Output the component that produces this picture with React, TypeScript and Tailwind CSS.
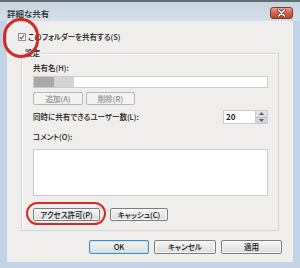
import React from "react";

function Btn({
  children,
  w,
  disabled,
  def,
}: {
  children: React.ReactNode;
  w: string;
  disabled?: boolean;
  def?: boolean;
}) {
  return (
    <div
      className={
        "flex items-center justify-center rounded-[2px] border " +
        w +
        " " +
        (disabled
          ? "border-[#b4b8bb] bg-[#f2f2f2] text-[#8c8c8c]"
          : def
          ? "border-[#3f8fb6] bg-gradient-to-b from-[#f4f6f7] to-[#dcdfe2] text-[#111111] shadow-[inset_0_0_0_1px_#bfe2f3]"
          : "border-[#7c7c7c] bg-gradient-to-b from-[#f6f6f6] to-[#dcdcdc] text-[#111111] shadow-[inset_0_0_0_1px_#fbfbfb]")
      }
    >
      <span className="leading-[10px]">{children}</span>
    </div>
  );
}

export default function App() {
  return (
    <div className="relative flex h-[268px] w-[300px] flex-col overflow-hidden bg-[#c1d3e4] font-['Noto_Sans_CJK_JP',sans-serif] text-[7.5px] font-medium text-[#151515] [font-feature-settings:'palt']">
      {/* title bar */}
      <div className="flex h-[21px] items-start border-t-2 border-[#606d72] bg-gradient-to-b from-[#c8d5e0] to-[#d3dfe9] px-[7px]">
        <span className="mt-[6px] text-[8.5px] leading-[11px] text-[#2a2a2a]">詳細な共有</span>
        <div className="ml-auto mt-[5px] flex h-[12px] w-[23px] items-center justify-center rounded-[3px] border border-[#7e3a31] bg-gradient-to-b from-[#e9a093] via-[#d3604d] to-[#c4412d]">
          <svg width="9" height="8" viewBox="0 0 9 8">
            <path d="M1.5 1 L7.5 7 M7.5 1 L1.5 7" stroke="#5a2a24" strokeWidth="3" strokeLinecap="round" />
            <path d="M1.5 1 L7.5 7 M7.5 1 L1.5 7" stroke="#ffffff" strokeWidth="1.6" strokeLinecap="round" />
          </svg>
        </div>
      </div>

      {/* body */}
      <div className="flex flex-1 px-[7px] pb-[6px]">
        <div className="flex flex-1 flex-col bg-[#f0eeec] pt-[11px]">
          {/* checkbox row */}
          <div className="ml-[11px] flex items-center gap-[2px]">
            <div className="flex h-[8px] w-[8px] items-center justify-center border border-[#8f8f8f] bg-gradient-to-br from-[#e6e6e6] to-[#ffffff]">
              <svg width="6" height="6" viewBox="0 0 6 6">
                <path d="M0.8 3.2 L2.4 4.8 L5.2 1" stroke="#4a5a8a" strokeWidth="1.1" fill="none" />
              </svg>
            </div>
            <span className="leading-[10px]">このフォルダーを共有する(S)</span>
          </div>

          {/* group box */}
          <div className="relative mx-[14px] mt-[11px] flex flex-col border border-[#cfd6db] px-[10px] pb-[9px] pl-[11px] pt-[9px] shadow-[inset_1px_1px_0_#ffffff]">
            <span className="absolute left-[2px] top-[-6px] bg-[#f0eeec] px-[1px] leading-[10px]">設定</span>

            <span className="leading-[10px]">共有名(H):</span>
            <div className="mt-[3px] flex h-[12px] border border-[#c9cbcd] bg-white">
              <div className="w-[20px] bg-[#a9a9a9]" />
              <div className="w-[20px] bg-[#d4d4d4]" />
            </div>

            <div className="mt-[4px] flex gap-[3px]">
              <Btn w="w-[50px] h-[13px]" disabled>
                追加(A)
              </Btn>
              <Btn w="w-[49px] h-[13px]" disabled>
                削除(R)
              </Btn>
            </div>

            <div className="mt-[5px] flex items-center">
              <span className="leading-[10px]">同時に共有できるユーザー数(L):</span>
              <div className="ml-auto flex h-[14px] w-[45px] border border-[#c9cbcd] bg-white">
                <span className="flex-1 pl-[2px] text-[8px] font-bold leading-[12px] text-[#222]">20</span>
                <div className="flex w-[12px] flex-col border-l border-[#c9cbcd] bg-gradient-to-b from-[#e4e6e8] to-[#cfd2d5]">
                  <div className="flex flex-1 items-center justify-center border-b border-[#b8bcc0]">
                    <svg width="5" height="3" viewBox="0 0 5 3">
                      <path d="M0 3 L2.5 0 L5 3 Z" fill="#55606a" />
                    </svg>
                  </div>
                  <div className="flex flex-1 items-center justify-center">
                    <svg width="5" height="3" viewBox="0 0 5 3">
                      <path d="M0 0 L2.5 3 L5 0 Z" fill="#55606a" />
                    </svg>
                  </div>
                </div>
              </div>
            </div>

            <span className="mt-[8px] leading-[10px]">コメント(O):</span>
            <div className="mt-[7px] h-[47px] border border-[#c9cbcd] bg-white" />

            <div className="mt-[12px] flex gap-[10px]">
              <Btn w="w-[67px] h-[13px]">アクセス許可(P)</Btn>
              <Btn w="w-[58px] h-[13px]">キャッシュ(C)</Btn>
            </div>
          </div>

          {/* bottom buttons */}
          <div className="mr-[11px] mt-[9px] flex justify-end gap-[5px]">
            <Btn w="w-[60px] h-[14px]" def>
              OK
            </Btn>
            <Btn w="w-[62px] h-[14px]">キャンセル</Btn>
            <Btn w="w-[61px] h-[14px]">適用</Btn>
          </div>
        </div>
      </div>

      {/* red annotation marks */}
      <div className="absolute left-[3px] top-[18px] h-[40px] w-[36px] rounded-full border-[3px] border-[#d42a25]" />
      <div className="absolute left-[26px] top-[202px] h-[23px] w-[80px] rounded-full border-2 border-[#d42a25]" />
    </div>
  );
}
